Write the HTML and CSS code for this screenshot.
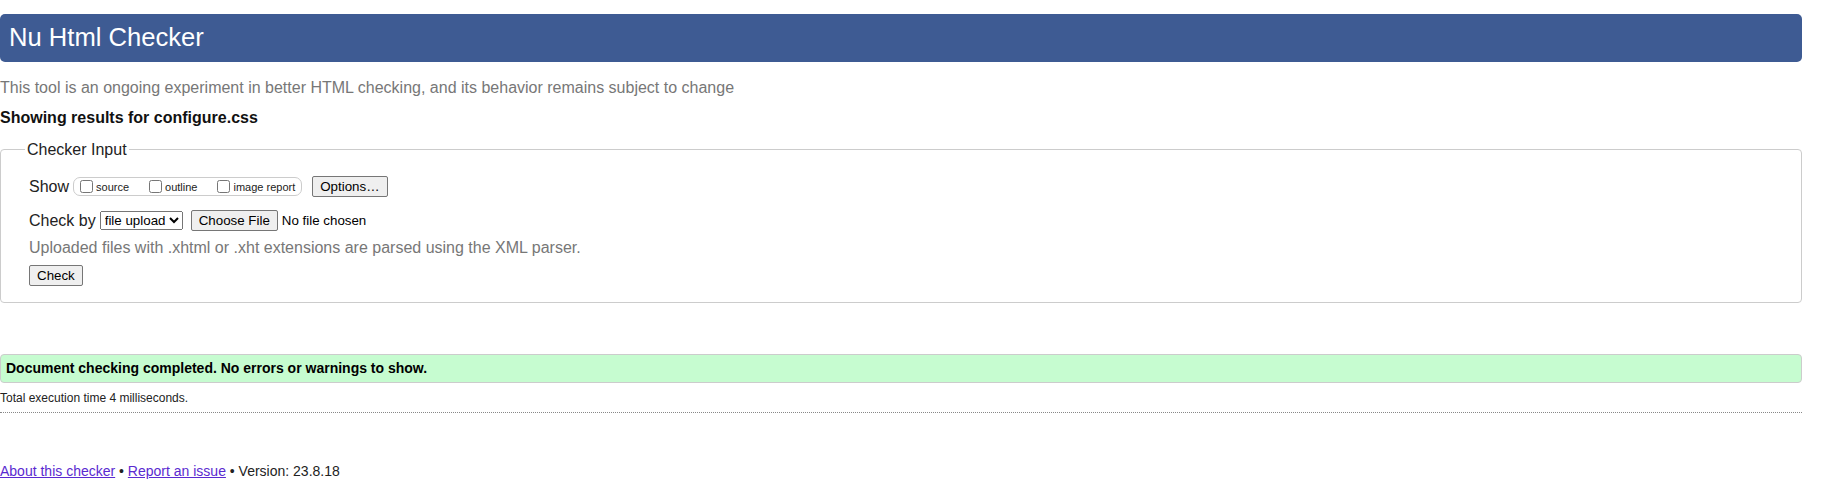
FILE: index.html
```html
<!DOCTYPE html>
<html lang="en">
<head>
<meta charset="utf-8">
<title>Nu Html Checker</title>
<link rel="stylesheet" href="styles.css">
</head>
<body>
<h1 class="title">Nu Html Checker</h1>
<p class="tagline">This tool is an ongoing experiment in better HTML checking, and its behavior remains subject to change</p>
<p class="showing">Showing results for configure.css</p>
<form class="checker">
  <fieldset class="input-box">
    <legend class="input-legend">Checker Input</legend>
    <div class="row">
      <span class="row-label">Show</span>
      <span class="options-group">
        <label class="opt"><input type="checkbox" class="cb">source</label>
        <label class="opt"><input type="checkbox" class="cb">outline</label>
        <label class="opt last"><input type="checkbox" class="cb">image report</label>
      </span>
      <button type="button" class="btn options-btn">Options…</button>
    </div>
    <div class="row row-gap">
      <span class="row-label">Check by</span>
      <select class="sel"><option>file upload</option></select>
      <input type="file" class="file">
    </div>
    <p class="hint">Uploaded files with .xhtml or .xht extensions are parsed using the XML parser.</p>
    <div class="row row-check"><button type="button" class="btn">Check</button></div>
  </fieldset>
</form>
<div class="success">Document checking completed. No errors or warnings to show.</div>
<p class="timing">Total execution time 4 milliseconds.</p>
<hr class="sep">
<p class="footer"><a class="link" href="#">About this checker</a> • <a class="link" href="#">Report an issue</a> • Version: 23.8.18</p>
</body>
</html>
```

FILE: styles.css
```css
html, body {
  background: #fff;
}

body {
  margin: 0 20px 0 0;
  font-family: "Liberation Sans", Arial, sans-serif;
  font-size: 16px;
  color: #222;
}

.title {
  margin: 14px 0 0;
  height: 48px;
  box-sizing: border-box;
  padding: 8px 0 10px 9px;
  font-size: 25.6px;
  line-height: 30px;
  font-weight: normal;
  color: #fff;
  background: #3e5b93;
  border-radius: 5px;
}

.tagline {
  margin: 17px 0 0;
  font-size: 16px;
  line-height: 18px;
  color: #777;
}

.showing {
  margin: 12px 0 0;
  font-size: 16px;
  line-height: 18px;
  font-weight: bold;
  color: #111;
}

.checker {
  margin: 13px 0 0;
}

.input-box {
  margin: 0;
  min-width: 0;
  border: 1px solid #ccc;
  border-radius: 4px;
  padding: 17px 20px 16px 28px;
}

.input-legend {
  padding: 0 2px;
  margin-left: -4px;
  font-size: 16px;
  line-height: 19px;
  color: #222;
}

.row {
  display: flex;
  align-items: center;
  height: 21px;
}

.row-gap {
  margin-top: 13px;
}

.row-check {
  margin-top: 8px;
}

.row-label {
  font-size: 16px;
  color: #222;
}

.options-group {
  display: inline-flex;
  align-items: center;
  height: 19px;
  box-sizing: border-box;
  margin-left: 4px;
  padding: 0 6px 0 2px;
  border: 1px solid #ccc;
  border-radius: 7px;
}

.opt {
  display: flex;
  align-items: center;
  font-size: 11px;
  color: #222;
  margin-right: 16px;
}

.opt.last {
  margin-right: 0;
}

.cb {
  width: 13px;
  height: 13px;
  margin: 0 3px 0 4px;
}

.btn {
  height: 21px;
  box-sizing: border-box;
  padding: 0 7px;
  font: 13.333px "Liberation Sans", Arial, sans-serif;
  color: #000;
  background: #efefef;
  border: 1px solid #767676;
  border-radius: 2px;
}

.options-btn {
  margin-left: 10px;
}

.sel {
  margin-left: 4px;
  width: 83px;
  height: 19px;
  box-sizing: border-box;
  font: 13.333px "Liberation Sans", Arial, sans-serif;
  color: #000;
}

.file {
  margin-left: 8px;
  height: 21px;
  font: 13.333px "Liberation Sans", Arial, sans-serif;
  color: #000;
}

.file::file-selector-button {
  height: 21px;
  box-sizing: border-box;
  padding: 0 7px;
  margin-right: 4px;
  font: 13.333px "Liberation Sans", Arial, sans-serif;
  color: #000;
  background: #efefef;
  border: 1px solid #767676;
  border-radius: 2px;
}

.hint {
  margin: 8px 0 0;
  font-size: 16px;
  line-height: 18px;
  color: #777;
}

.success {
  margin-top: 51px;
  padding: 6px 5px;
  font-size: 14px;
  line-height: 15px;
  font-weight: bold;
  color: #000;
  background: #c6fcd0;
  border: 1px solid #ccc;
  border-radius: 4px;
}

.timing {
  margin: 8px 0 0;
  font-size: 12px;
  line-height: 14px;
  color: #222;
}

.sep {
  margin: 7px 0 0;
  height: 0;
  border: 0;
  border-top: 1px dotted #888;
}

.footer {
  margin: 50px 0 0;
  font-size: 14px;
  line-height: 16px;
  color: #222;
}

.link {
  color: #5a2ad0;
}
```
